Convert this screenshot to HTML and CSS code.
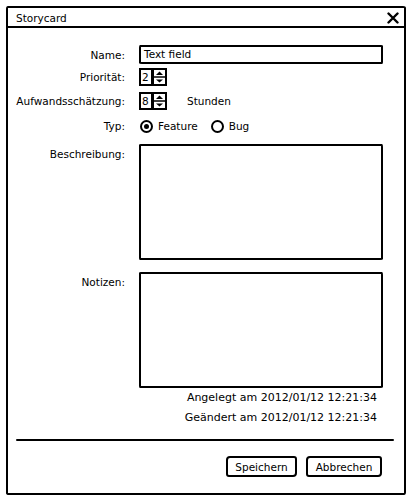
FILE: index.html
```html
<!doctype html>
<html lang="de">
<head>
    <meta charset="UTF-8">
    <title>Storycard</title>
    <link rel="stylesheet" href="styles.css">
</head>
<body>

<div class="window">
    <div class="titlebar">
        <span class="title">Storycard</span>
        <svg class="close" width="12" height="12" viewBox="0 0 12 12">
            <path d="M1.5 1.5 L10.5 10.5 M10.5 1.5 L1.5 10.5" stroke="#000" stroke-width="2.4" stroke-linecap="round"/>
        </svg>
    </div>

    <div class="form">
        <div class="row row-name">
            <label>Name:</label>
            <div class="field textfield">Text field</div>
        </div>

        <div class="row row-prio">
            <label>Priorität:</label>
            <div class="field">
                <div class="spinner">
                    <span class="num">2</span>
                    <span class="arrows">
                        <svg width="11" height="14" viewBox="0 0 11 14">
                            <path d="M5.5 1.5 L9 5 L2 5 Z" fill="#000"/>
                            <path d="M0 7 L11 7" stroke="#000" stroke-width="1.5"/>
                            <path d="M2 9.5 L9 9.5 L5.5 12.5 Z" fill="#000"/>
                        </svg>
                    </span>
                </div>
            </div>
        </div>

        <div class="row row-aufwand">
            <label>Aufwandsschätzung:</label>
            <div class="field">
                <div class="spinner">
                    <span class="num">8</span>
                    <span class="arrows">
                        <svg width="11" height="14" viewBox="0 0 11 14">
                            <path d="M5.5 1.5 L9 5 L2 5 Z" fill="#000"/>
                            <path d="M0 7 L11 7" stroke="#000" stroke-width="1.5"/>
                            <path d="M2 9.5 L9 9.5 L5.5 12.5 Z" fill="#000"/>
                        </svg>
                    </span>
                </div>
                <span class="unit">Stunden</span>
            </div>
        </div>

        <div class="row row-typ">
            <label>Typ:</label>
            <div class="field radios">
                <span class="radio checked"></span><span class="radio-label">Feature</span>
                <span class="radio"></span><span class="radio-label">Bug</span>
            </div>
        </div>

        <div class="row row-area">
            <label class="top">Beschreibung:</label>
            <div class="field textarea"></div>
        </div>

        <div class="row row-area row-notes">
            <label class="top">Notizen:</label>
            <div class="field textarea"></div>
        </div>

        <div class="meta">
            <div>Angelegt am 2012/01/12 12:21:34</div>
            <div>Geändert am 2012/01/12 12:21:34</div>
        </div>
    </div>

    <div class="separator"></div>

    <div class="buttons">
        <button class="btn btn-save">Speichern</button>
        <button class="btn btn-cancel">Abbrechen</button>
    </div>
</div>

</body>
</html>
```

FILE: styles.css
```css
* {
    margin: 0;
    padding: 0;
    box-sizing: border-box;
}

html, body {
    background: #fff;
}

body {
    font-family: "DejaVu Sans", "Liberation Sans", sans-serif;
    font-size: 10.5px;
    color: #000;
}

.window {
    margin: 6px 0 0 6px;
    width: 400px;
    height: 489px;
    border: 2px solid #000;
    border-radius: 2px 3px 2px 3px / 3px 2px 3px 2px;
}

.titlebar {
    height: 20px;
    border-bottom: 2px solid #000;
    display: flex;
    align-items: center;
    justify-content: space-between;
    padding: 1px 5px 0 8px;
}

.titlebar .title {
    font-size: 10.5px;
}

.titlebar .close {
    display: block;
    margin-top: 1px;
}

.row {
    display: grid;
    grid-template-columns: 117px 244px;
    column-gap: 14px;
    align-items: center;
}

.row label {
    text-align: right;
    line-height: 14px;
}

.row label.top {
    align-self: start;
    padding-top: 3px;
}

.row-name {
    margin-top: 17px;
    height: 19px;
}

.row-prio {
    margin-top: 4px;
    height: 18px;
}

.row-aufwand {
    margin-top: 6px;
    height: 18px;
}

.row-typ {
    margin-top: 8px;
    height: 16px;
}

.row-area {
    margin-top: 10px;
    height: 116px;
    align-items: stretch;
}

.row-notes {
    margin-top: 12px;
}

.field {
    display: flex;
    align-items: center;
    height: 100%;
}

.textfield {
    border: 2px solid #000;
    border-radius: 1px 2px 1px 3px / 3px 1px 2px 1px;
    padding-left: 3px;
    line-height: 15px;
}

.textarea {
    border: 2px solid #000;
    border-radius: 2px 1px 3px 1px / 1px 3px 1px 2px;
}

.spinner {
    display: flex;
    height: 18px;
}

.spinner .num {
    width: 14px;
    border: 2px solid #000;
    line-height: 14px;
    padding-left: 1px;
}

.spinner .arrows {
    width: 15px;
    border: 2px solid #000;
    margin-left: -1px;
    display: flex;
    align-items: center;
    justify-content: center;
}

.spinner .arrows svg {
    display: block;
}

.unit {
    margin-left: 20px;
}

.radios .radio {
    width: 13px;
    height: 13px;
    border: 2px solid #000;
    border-radius: 50%;
    margin-left: 1px;
    display: flex;
    align-items: center;
    justify-content: center;
}

.radios .radio.checked::after {
    content: "";
    width: 5px;
    height: 5px;
    border-radius: 50%;
    background: #000;
}

.radios .radio-label {
    margin-left: 5px;
    margin-right: 12px;
}

.meta {
    text-align: right;
    padding-right: 27px;
    font-size: 11px;
    line-height: 20px;
}

.separator {
    margin: 11px 10px 0 8px;
    height: 2px;
    background: #000;
    border-radius: 1px;
}

.buttons {
    margin-top: 15px;
    display: flex;
    justify-content: flex-end;
    gap: 9px;
    padding-right: 22px;
}

.btn {
    height: 21px;
    border: 2px solid #000;
    border-radius: 4px 3px 4px 3px;
    background: #fff;
    font-family: inherit;
    font-size: 10.5px;
    color: #000;
}

.btn-save {
    width: 71px;
}

.btn-cancel {
    width: 76px;
}
```
